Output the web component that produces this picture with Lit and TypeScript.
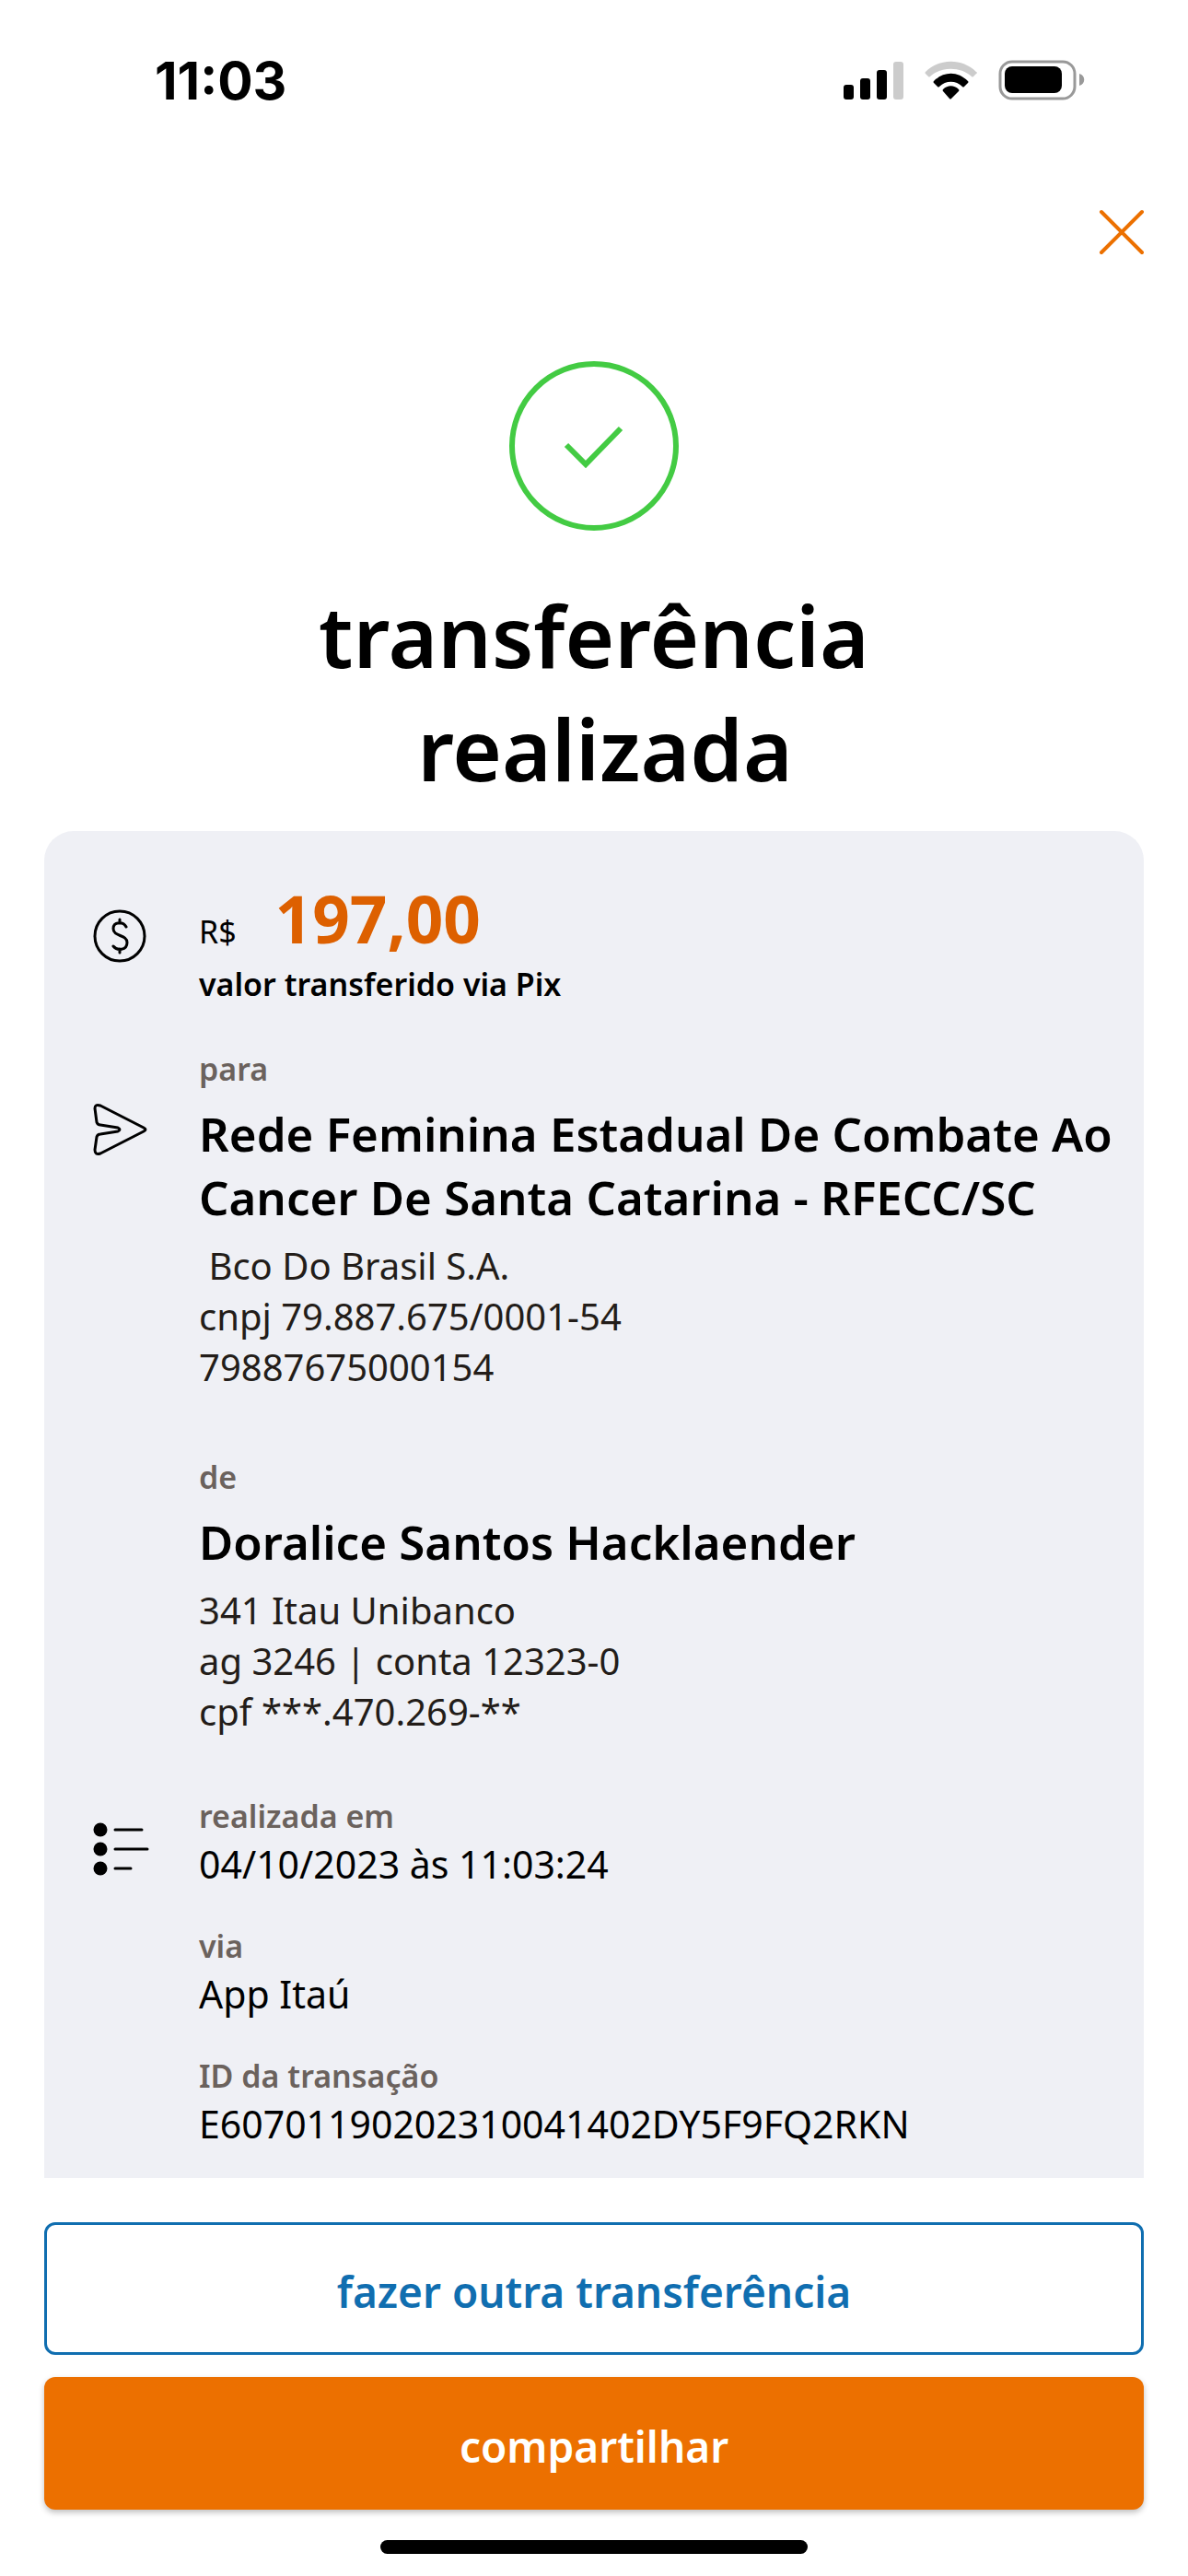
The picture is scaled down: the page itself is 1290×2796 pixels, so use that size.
import { LitElement, html, css } from "lit";
import { customElement } from "lit/decorators.js";

@customElement("status-bar")
class StatusBar extends LitElement {
  static styles = css`
    :host {
      display: flex;
      justify-content: space-between;
      align-items: center;
      padding: 48px 110px 0 168px;
    }
    .time {
      font: 700 57px/80px Inter, sans-serif;
    }
    .signals {
      display: block;
    }
  `;
  render() {
    return html`
      <time class="time" datetime="11:03">11:03</time>
      <svg class="signals" width="264" height="46" viewBox="0 0 264 46" role="img" aria-label="sinal, wi-fi e bateria">
        <g>
          <rect x="0" y="27" width="11" height="16" rx="3" />
          <rect x="18" y="20" width="11" height="23" rx="3" />
          <rect x="36" y="11" width="11" height="32" rx="3" />
          <rect x="54" y="2" width="11" height="41" rx="3" fill="#ccc" />
        </g>
        <g>
          <path d="M89 15 Q88 14 89 13 C104 -2 129 -2 144 13 Q146 14 144 15 L141 18 Q140 19 139 18 C127 7 106 7 94 18 Q93 19 92 18 Z" fill="#ccc" />
          <path d="M98 25 Q97 24 98 23 C109 12 124 12 135 23 Q136 24 135 25 L131 29 Q130 30 129 29 C122 22 111 22 104 29 Q103 30 102 29 Z" />
          <path d="M108 34 Q107 33 108 32 C113 27 120 27 125 32 Q126 33 125 34 L117 42 Q116 43 115 42 Z" />
        </g>
        <rect x="170" y="2" width="81" height="40" rx="13" fill="none" stroke="#999" stroke-width="3" />
        <rect x="175" y="7" width="62" height="29" rx="8" />
        <path d="M256 15 C263 17 263 26 256 28 Z" fill="#999" />
      </svg>
    `;
  }
}

@customElement("app-root")
class AppRoot extends LitElement {
  static styles = css`
    :host {
      display: flex;
      flex-direction: column;
      min-height: 100vh;
      box-sizing: border-box;
      background: #fff;
      color: #000;
      font-family: "Noto Sans", "Open Sans", sans-serif;
    }
    * {
      box-sizing: border-box;
    }
    svg {
      display: block;
    }
    h1,
    h2,
    p,
    dl,
    dd {
      margin: 0;
    }
    .top {
      display: flex;
      justify-content: flex-end;
      padding: 88px 36px 0;
    }
    .close {
      padding: 10px;
      border: 0;
      background: none;
      cursor: pointer;
    }
    .head {
      display: flex;
      flex-direction: column;
      align-items: center;
      gap: 52px;
      padding-top: 104px;
    }
    .title {
      font-size: 92px;
      line-height: 123px;
      font-weight: 600;
      text-align: center;
      white-space: pre-wrap;
    }
    .receipt {
      flex: 1;
      margin: 28px 48px 0;
      padding: 62px 24px 0 52px;
      border-radius: 32px 32px 0 0;
      background: #eff0f5;
    }
    .row {
      display: grid;
      grid-template-columns: 64px 1fr;
      column-gap: 52px;
    }
    .icon {
      margin-top: 22px;
    }
    .send-icon {
      margin-top: 60px;
    }
    .amount {
      display: flex;
      align-items: baseline;
      gap: 42px;
      line-height: 66px;
      font-size: 34px;
    }
    .value {
      color: #dd6000;
      font-size: 71px;
      font-weight: 700;
    }
    .caption,
    .label {
      font-size: 34px;
      line-height: 48px;
      font-weight: 600;
    }
    .label {
      color: #6b625d;
    }
    .party {
      margin-top: 44px;
    }
    .name {
      margin: 12px 0;
      font-size: 51px;
      line-height: 69px;
      font-weight: 600;
    }
    .line {
      color: #231d19;
      font-size: 40px;
      line-height: 55px;
      white-space: pre-wrap;
    }
    .origin {
      margin-top: 68px;
    }
    .details {
      display: grid;
      gap: 37px;
    }
    .list-row {
      margin-top: 62px;
    }
    .list-icon {
      margin-top: 30px;
    }
    .data {
      font-size: 41px;
      line-height: 56px;
    }
    .actions {
      display: grid;
      gap: 24px;
      padding: 48px 48px 33px;
    }
    .btn {
      height: 144px;
      padding: 6px 24px 0;
      border-radius: 12px;
      font: 600 46px/60px "Noto Sans", "Open Sans", sans-serif;
      cursor: pointer;
    }
    .outline {
      border: 3px solid #106eb0;
      background: #fff;
      color: #106eb0;
    }
    .solid {
      border: 0;
      background: #ec7000;
      color: #fff;
      box-shadow: 0 3px 6px rgba(0, 0, 0, 0.25);
    }
    .home {
      width: 36%;
      height: 15px;
      margin: 0 auto 24px;
      border-radius: 8px;
      background: #000;
    }
  `;

  private parties = [
    {
      role: "para",
      name: "Rede Feminina Estadual De Combate Ao Cancer De Santa Catarina - RFECC/SC",
      lines: [" Bco Do Brasil S.A.", "cnpj 79.887.675/0001-54", "79887675000154"],
    },
    {
      role: "de",
      name: "Doralice Santos Hacklaender",
      lines: ["341 Itau Unibanco", "ag 3246 | conta 12323-0", "cpf ***.470.269-**"],
    },
  ];

  private details = [
    ["realizada em", "04/10/2023 às 11:03:24"],
    ["via", "App Itaú"],
    ["ID da transação", "E60701190202310041402DY5F9FQ2RKN"],
  ];

  private party(i: number) {
    const p = this.parties[i];
    return html`
      <p class="label">${p.role}</p>
      <h2 class="name">${p.name}</h2>
      ${p.lines.map((l) => html`<p class="line">${l}</p>`)}
    `;
  }

  render() {
    return html`
      <status-bar></status-bar>
      <div class="top">
        <button class="close" aria-label="fechar">
          <svg width="52" height="52" viewBox="0 0 52 52" stroke="#ec7000" stroke-width="4" stroke-linecap="round">
            <path d="M4 4 L48 48 M48 4 L4 48" />
          </svg>
        </button>
      </div>
      <header class="head">
        <svg width="184" height="184" viewBox="0 0 184 184" fill="none" stroke="#43cb43" stroke-width="6" aria-hidden="true">
          <circle cx="92" cy="92" r="89" />
          <path d="M62 91 L83 112 L121 73" />
        </svg>
        <h1 class="title">${"transferência\n realizada"}</h1>
      </header>
      <main class="receipt">
        <section class="row">
          <svg class="icon" width="64" height="62" viewBox="0 0 64 62" fill="none" stroke="#000" stroke-width="3" stroke-linecap="round" aria-hidden="true">
            <circle cx="30" cy="30" r="27" />
            <path d="M37 20 C34 14 23 14 23 22 C23 31 38 28 38 37 C38 46 27 46 23 41 M30 12 V16 M30 44 V48" />
          </svg>
          <div>
            <p class="amount"><span>R$</span><span class="value">197,00</span></p>
            <p class="caption">valor transferido via Pix</p>
          </div>
        </section>
        <section class="row party">
          <svg class="send-icon" width="64" height="62" viewBox="0 0 64 62" fill="none" stroke="#000" stroke-width="3" stroke-linejoin="round" aria-hidden="true">
            <path d="M3 7 Q3 2 9 4 L56 28 Q60 30 56 32 L9 56 Q3 58 3 52 L5 38 Q6 35 9 35 L28 32 Q32 30 28 28 L9 25 Q6 25 5 22 Z" />
          </svg>
          <div>
            ${this.party(0)}
            <div class="origin">${this.party(1)}</div>
          </div>
        </section>
        <section class="row list-row">
          <svg class="list-icon" width="64" height="62" viewBox="0 0 64 62" stroke="#000" stroke-width="3" stroke-linecap="round" aria-hidden="true">
            <g stroke="none">
              <circle cx="9" cy="9" r="7.5" />
              <circle cx="9" cy="30" r="7.5" />
              <circle cx="9" cy="51" r="7.5" />
            </g>
            <path d="M25 9 H54 M25 30 H60 M25 51 H42" />
          </svg>
          <dl class="details">
            ${this.details.map(([k, v]) => html`<div><dt class="label">${k}</dt><dd class="data">${v}</dd></div>`)}
          </dl>
        </section>
      </main>
      <footer>
        <div class="actions">
          <button class="btn outline">fazer outra transferência</button>
          <button class="btn solid">compartilhar</button>
        </div>
        <div class="home"></div>
      </footer>
    `;
  }
}
